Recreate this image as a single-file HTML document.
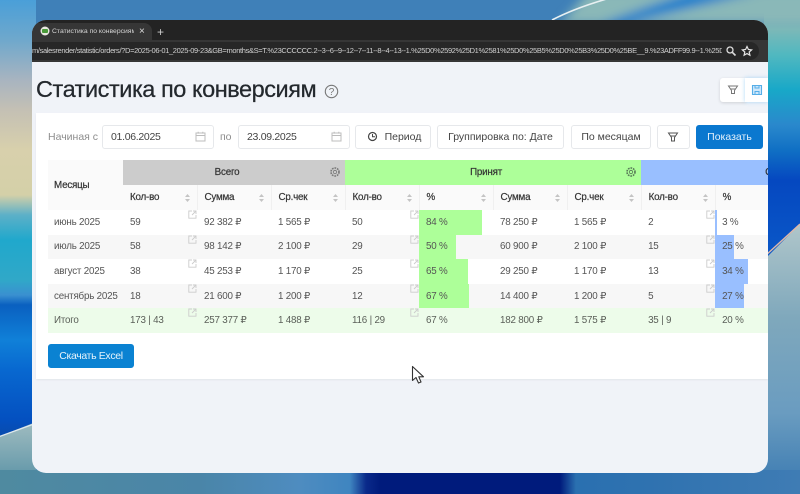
<!DOCTYPE html>
<html lang="ru"><head><meta charset="utf-8"><title>Статистика по конверсиям</title>
<style>
*{box-sizing:border-box}
html,body{margin:0;padding:0;width:800px;height:494px;overflow:hidden;background:#3f80b8;font-family:"Liberation Sans","DejaVu Sans",sans-serif}
.st{position:absolute}
#sl{left:0;top:0;width:36px;height:494px;background:linear-gradient(180deg,#4a9fd8 0,#6fa8cc 40px,#a8b4c0 80px,#c4c0b4 110px,#d8d0ac 150px,#d4d0a8 195px,#5cb0c8 215px,#20a8cc 240px,#30a8c8 280px,#3a90d0 295px,#0a60c0 305px,#1080d8 340px,#0868d0 370px,#0450c0 420px,#0a4aa8 440px)}
#sr{left:764px;top:0;width:36px;height:494px;background:linear-gradient(180deg,#2a88c8 0,#6aa8b8 15px,#7ab8b8 30px,#50b8c0 55px,#18a8c8 90px,#2a88cc 125px,#1070c4 150px,#0548c0 180px,#0a58c8 260px)}
#sb{left:0;top:470px;width:800px;height:24px;background:linear-gradient(90deg,#4f8aa0 0,#4a85a8 200px,#4e8cc0 300px,#3f85c0 350px,#0a2a8a 366px,#001b7c 380px,#001b7c 560px,#2a70b0 576px,#2f72b0 650px,#3f7cb4 800px)}
#bg{position:absolute;left:0;top:0}
#win{position:absolute;left:32px;top:20px;width:736px;height:453px;border-radius:14px;overflow:hidden;background:#f0f3f8;filter:blur(.25px)}
#tabs{position:absolute;left:0;top:0;width:736px;height:22px;background:#232323}
#tab{position:absolute;left:0;top:3px;width:120px;height:19px;background:#363636;border-radius:8px 8px 0 0}
#urlrow{position:absolute;left:0;top:20px;width:736px;height:22px;background:#363636}
#urlpill{position:absolute;left:-20px;top:2px;width:747px;height:18px;border-radius:9px;background:#272727}
#url{position:absolute;left:0;top:24px;width:690px;height:14px;font-size:7.5px;letter-spacing:-.35px;line-height:14px;color:#d0d0d0;white-space:nowrap;overflow:hidden}
#tabt{position:absolute;left:20px;top:3px;font-size:6.8px;line-height:18px;color:#d5d5d5;white-space:nowrap;width:82px;overflow:hidden}
h1{position:absolute;left:4px;top:50px;margin:0;font-size:23.5px;letter-spacing:-.45px;line-height:38px;font-weight:400;color:#23282d;white-space:nowrap;-webkit-text-stroke:.25px #23282d}
#card{position:absolute;left:4px;top:93px;width:732px;height:266px;background:#fff;box-shadow:0 1px 2px rgba(0,0,0,.06)}
.ib{position:absolute;background:#fff;border:1px solid #e6e8eb;border-radius:3px;color:#444;font-size:10.5px;line-height:22px;text-align:center;white-space:nowrap}
.lb{position:absolute;font-size:10.5px;line-height:24px;color:#8d8d8d;white-space:nowrap}
.dd{text-align:left;padding-left:8px;letter-spacing:-.3px}
#tw{position:absolute;left:12px;top:47px;width:720px;height:174px;overflow:hidden}
table{border-collapse:collapse;table-layout:fixed;width:722px;font-size:9.8px;letter-spacing:-.2px;color:#555}
td,th{padding:0 0 0 7px;position:relative;text-align:left;white-space:nowrap;overflow:visible}
td:first-child{padding-left:6px}
th{font-weight:400;color:#333;-webkit-text-stroke:.2px #333}
.h1 th{height:25px;text-align:center;padding:0 14px 0 0}
.h2 th{height:25px;background:#fafafa;border-right:1px solid #f0f0f0}
tbody tr{height:24.6px}
tbody tr:nth-child(odd) td{background:#fff}
tbody tr:nth-child(even) td{background:#f7f7f7}
tbody tr.tot td{background:#edfcea;color:#5a5f58}
.g{background:#ccc}.p{background:#adff99}.b{background:#99bfff}
.bar{position:absolute;left:0;top:0;bottom:0}
.t{position:relative}
.ex{position:absolute;right:0;top:0;width:9px;height:9px}
.so{position:absolute;right:6px;top:8px;width:7px;height:10px}
.cog{position:absolute;right:4px;top:6px;width:12px;height:12px}
</style></head>
<body>
<div class="st" id="sl"></div>
<div class="st" id="sr"></div>
<svg id="bg" width="800" height="494" viewBox="0 0 800 494">
<defs><filter id="f" x="-30%" y="-30%" width="160%" height="160%"><feGaussianBlur stdDeviation="5"/></filter>
<linearGradient id="lg" x1="0" y1="0" x2="0" y2="1"><stop offset="0" stop-color="#a0bcc0"/><stop offset=".6" stop-color="#6f9fae"/><stop offset="1" stop-color="#4a8aa0"/></linearGradient>
<linearGradient id="rg" x1="0" y1="0" x2="0" y2="1"><stop offset="0" stop-color="#b0c6ca"/><stop offset=".35" stop-color="#7fa8bc"/><stop offset=".7" stop-color="#6a9cc0"/><stop offset="1" stop-color="#3878b0"/></linearGradient></defs>
<path d="M0 436L36 422V494H0Z" fill="url(#lg)"/>
<path d="M764 260L800 224V494H764Z" fill="url(#rg)"/>
<path d="M-2 437L34 424" stroke="#dfe8ec" stroke-width="1.3"/>
<path d="M765 256L800 224" stroke="#e0b8a8" stroke-width="1.4"/>
<g filter="url(#f)">
<path d="M590 -10H820V24H560Z" fill="#8ab8b8"/>
<path d="M625 24Q690 8 760 -8H690Q650 5 600 24Z" fill="#1f80cc"/>
</g>
<path d="M552 20Q575 8 610 -2" stroke="#e8f0f2" stroke-width="1.6" fill="none"/>
</svg>
<div class="st" id="sb"></div>

<div id="win">
<div id="tabs"></div>
<div id="tab"></div>
<svg style="position:absolute;left:8px;top:6px" width="10" height="10"><circle cx="5" cy="5" r="4.5" fill="#e8e8e0"/><rect x="2" y="3" width="6" height="4" rx="1" fill="#4a9a3a"/></svg>
<div id="tabt">Статистика по конверсиям - S</div>
<div style="position:absolute;left:107px;top:4px;font-size:10px;line-height:16px;color:#ddd">×</div>
<div style="position:absolute;left:125px;top:4px;font-size:12px;line-height:16px;color:#ccc">+</div>
<div id="urlrow"><div id="urlpill"></div></div>
<div id="url">m/salesrender/statistic/orders/?D=2025-06-01_2025-09-23&amp;GB=months&amp;S=T.%23CCCCCC.2--3--6--9--12--7--11--8--4--13--1.%25D0%2592%25D1%2581%25D0%25B5%25D0%25B3%25D0%25BE__9.%23ADFF99.9--1.%25D...</div>
<svg style="position:absolute;left:693px;top:25px" width="12" height="12" viewBox="0 0 12 12"><circle cx="5" cy="5" r="3" fill="none" stroke="#ddd" stroke-width="1.3"/><path d="M7.3 7.3L10.5 10.5" stroke="#ddd" stroke-width="1.6"/></svg>
<svg style="position:absolute;left:709px;top:25px" width="12" height="12" viewBox="0 0 12 12"><path d="M6 1.5L7.4 4.5L10.6 4.9L8.2 7L8.9 10.2L6 8.6L3.1 10.2L3.8 7L1.4 4.9L4.6 4.5Z" fill="none" stroke="#e4e4e4" stroke-width="1.2"/></svg>

<h1>Статистика по конверсиям</h1>
<svg style="position:absolute;left:292px;top:64px" width="15" height="15" viewBox="0 0 15 15"><circle cx="7.5" cy="7.5" r="6.2" fill="none" stroke="#777" stroke-width="1.1"/><text x="7.5" y="11" font-size="10" text-anchor="middle" fill="#777" font-family="Liberation Sans">?</text></svg>

<div style="position:absolute;left:688px;top:58px;width:26px;height:24px;background:#fff;border-radius:3px 0 0 3px;box-shadow:0 1px 3px rgba(0,0,0,.14)"><svg style="position:absolute;left:7px;top:6px" width="12" height="12" viewBox="0 0 12 12"><path d="M1.5 2H10.5L7.5 6.5V9.5H4.5V6.5Z" fill="none" stroke="#777" stroke-width="1"/><path d="M3.5 5H8.5" stroke="#777"/></svg></div>
<div style="position:absolute;left:713px;top:58px;width:23px;height:24px;background:#fff;box-shadow:0 0 4px rgba(80,170,240,.45)"><svg style="position:absolute;left:6px;top:6px" width="12" height="12" viewBox="0 0 12 12"><path d="M1.5 1.5H10.5V10.5H1.5Z" fill="#cfe8fb" stroke="#55aee8" stroke-width="1.1"/><path d="M4 1.5V4H8V1.5M4 10.5V7.5H8V10.5" fill="none" stroke="#55aee8"/></svg></div>

<div id="card">
<div class="lb" style="left:12px;top:12px">Начиная с</div>
<div class="ib dd" style="left:66px;top:12px;width:112px;height:24px">01.06.2025</div>
<svg style="position:absolute;left:159px;top:18px" width="11" height="11" viewBox="0 0 11 11"><path d="M1 2H10V10H1ZM1 4.5H10M3.2 .8V2.6M7.8 .8V2.6" fill="none" stroke="#bdbdbd"/></svg>
<div class="lb" style="left:184px;top:12px">по</div>
<div class="ib dd" style="left:202px;top:12px;width:112px;height:24px">23.09.2025</div>
<svg style="position:absolute;left:295px;top:18px" width="11" height="11" viewBox="0 0 11 11"><path d="M1 2H10V10H1ZM1 4.5H10M3.2 .8V2.6M7.8 .8V2.6" fill="none" stroke="#bdbdbd"/></svg>
<div class="ib" style="left:319px;top:12px;width:76px;height:24px;padding-left:20px">Период</div>
<svg style="position:absolute;left:331px;top:18px" width="11" height="11" viewBox="0 0 11 11"><circle cx="5.5" cy="5.5" r="4" fill="none" stroke="#444" stroke-width="1.2"/><path d="M5.5 3V5.8H8" fill="none" stroke="#444"/></svg>
<div class="ib" style="left:401px;top:12px;width:127px;height:24px">Группировка по: Дате</div>
<div class="ib" style="left:535px;top:12px;width:80px;height:24px">По месяцам</div>
<div class="ib" style="left:621px;top:12px;width:33px;height:24px"></div>
<svg style="position:absolute;left:631px;top:18px" width="12" height="12" viewBox="0 0 12 12"><path d="M1.5 2H10.5L7.5 6.5V10H4.5V6.5Z" fill="none" stroke="#555" stroke-width="1"/><path d="M3.5 5H8.5" stroke="#555"/></svg>
<div class="ib" style="left:660px;top:12px;width:67px;height:24px;background:#0a78cf;border-color:#0a78cf;color:#e4f1fb">Показать</div>

<div id="tw">
<table>
<colgroup><col style="width:75px"><col style="width:74px"><col style="width:74px"><col style="width:74px"><col style="width:74px"><col style="width:74px"><col style="width:74px"><col style="width:74px"><col style="width:74px"><col style="width:55px"></colgroup>
<thead>
<tr class="h1"><th rowspan="2" style="background:#fafafa;text-align:left;padding-left:6px">Месяцы</th>
<th colspan="3" class="g">Всего<svg class="cog" viewBox="0 0 12 12"><circle cx="6" cy="6" r="1.7" fill="none" stroke="#777" stroke-width=".8"/><circle cx="6" cy="6" r="4" fill="none" stroke="#777" stroke-width="1.6" stroke-dasharray="1.7 .9"/></svg></th>
<th colspan="4" class="p">Принят<svg class="cog" viewBox="0 0 12 12"><circle cx="6" cy="6" r="1.7" fill="none" stroke="#575" stroke-width=".8"/><circle cx="6" cy="6" r="4" fill="none" stroke="#575" stroke-width="1.6" stroke-dasharray="1.7 .9"/></svg></th>
<th colspan="2" class="b" style="text-align:left;padding-left:124px">С</th></tr>
<tr class="h2"><th>Кол-во<svg class="so" viewBox="0 0 7 10"><path d="M3.5 1L6 4H1ZM3.5 9L1 6H6Z" fill="#c4c4c4"/></svg></th><th>Сумма<svg class="so" viewBox="0 0 7 10"><path d="M3.5 1L6 4H1ZM3.5 9L1 6H6Z" fill="#c4c4c4"/></svg></th><th>Ср.чек<svg class="so" viewBox="0 0 7 10"><path d="M3.5 1L6 4H1ZM3.5 9L1 6H6Z" fill="#c4c4c4"/></svg></th><th>Кол-во<svg class="so" viewBox="0 0 7 10"><path d="M3.5 1L6 4H1ZM3.5 9L1 6H6Z" fill="#c4c4c4"/></svg></th><th>%<svg class="so" viewBox="0 0 7 10"><path d="M3.5 1L6 4H1ZM3.5 9L1 6H6Z" fill="#c4c4c4"/></svg></th><th>Сумма<svg class="so" viewBox="0 0 7 10"><path d="M3.5 1L6 4H1ZM3.5 9L1 6H6Z" fill="#c4c4c4"/></svg></th><th>Ср.чек<svg class="so" viewBox="0 0 7 10"><path d="M3.5 1L6 4H1ZM3.5 9L1 6H6Z" fill="#c4c4c4"/></svg></th><th>Кол-во<svg class="so" viewBox="0 0 7 10"><path d="M3.5 1L6 4H1ZM3.5 9L1 6H6Z" fill="#c4c4c4"/></svg></th><th>%</th></tr>
</thead>
<tbody>
<tr><td>июнь 2025</td><td>59<svg class="ex" viewBox="0 0 9 9"><path d="M4 1H.8V8.2H8V5M5 1H8V4M8 1L4 5" fill="none" stroke="#ccc" stroke-width=".9"/></svg></td><td>92 382 ₽</td><td>1 565 ₽</td><td>50<svg class="ex" viewBox="0 0 9 9"><path d="M4 1H.8V8.2H8V5M5 1H8V4M8 1L4 5" fill="none" stroke="#ccc" stroke-width=".9"/></svg></td><td><div class="bar p" style="width:63px"></div><span class="t">84 %</span></td><td>78 250 ₽</td><td>1 565 ₽</td><td>2<svg class="ex" viewBox="0 0 9 9"><path d="M4 1H.8V8.2H8V5M5 1H8V4M8 1L4 5" fill="none" stroke="#ccc" stroke-width=".9"/></svg></td><td><div class="bar b" style="width:2px"></div><span class="t">3 %</span></td></tr>
<tr><td>июль 2025</td><td>58<svg class="ex" viewBox="0 0 9 9"><path d="M4 1H.8V8.2H8V5M5 1H8V4M8 1L4 5" fill="none" stroke="#ccc" stroke-width=".9"/></svg></td><td>98 142 ₽</td><td>2 100 ₽</td><td>29<svg class="ex" viewBox="0 0 9 9"><path d="M4 1H.8V8.2H8V5M5 1H8V4M8 1L4 5" fill="none" stroke="#ccc" stroke-width=".9"/></svg></td><td><div class="bar p" style="width:37px"></div><span class="t">50 %</span></td><td>60 900 ₽</td><td>2 100 ₽</td><td>15<svg class="ex" viewBox="0 0 9 9"><path d="M4 1H.8V8.2H8V5M5 1H8V4M8 1L4 5" fill="none" stroke="#ccc" stroke-width=".9"/></svg></td><td><div class="bar b" style="width:19px"></div><span class="t">25 %</span></td></tr>
<tr><td>август 2025</td><td>38<svg class="ex" viewBox="0 0 9 9"><path d="M4 1H.8V8.2H8V5M5 1H8V4M8 1L4 5" fill="none" stroke="#ccc" stroke-width=".9"/></svg></td><td>45 253 ₽</td><td>1 170 ₽</td><td>25<svg class="ex" viewBox="0 0 9 9"><path d="M4 1H.8V8.2H8V5M5 1H8V4M8 1L4 5" fill="none" stroke="#ccc" stroke-width=".9"/></svg></td><td><div class="bar p" style="width:49px"></div><span class="t">65 %</span></td><td>29 250 ₽</td><td>1 170 ₽</td><td>13<svg class="ex" viewBox="0 0 9 9"><path d="M4 1H.8V8.2H8V5M5 1H8V4M8 1L4 5" fill="none" stroke="#ccc" stroke-width=".9"/></svg></td><td><div class="bar b" style="width:33px"></div><span class="t">34 %</span></td></tr>
<tr><td>сентябрь 2025</td><td>18<svg class="ex" viewBox="0 0 9 9"><path d="M4 1H.8V8.2H8V5M5 1H8V4M8 1L4 5" fill="none" stroke="#ccc" stroke-width=".9"/></svg></td><td>21 600 ₽</td><td>1 200 ₽</td><td>12<svg class="ex" viewBox="0 0 9 9"><path d="M4 1H.8V8.2H8V5M5 1H8V4M8 1L4 5" fill="none" stroke="#ccc" stroke-width=".9"/></svg></td><td><div class="bar p" style="width:50px"></div><span class="t">67 %</span></td><td>14 400 ₽</td><td>1 200 ₽</td><td>5<svg class="ex" viewBox="0 0 9 9"><path d="M4 1H.8V8.2H8V5M5 1H8V4M8 1L4 5" fill="none" stroke="#ccc" stroke-width=".9"/></svg></td><td><div class="bar b" style="width:29px"></div><span class="t">27 %</span></td></tr>
<tr class="tot"><td>Итого</td><td>173 | 43<svg class="ex" viewBox="0 0 9 9"><path d="M4 1H.8V8.2H8V5M5 1H8V4M8 1L4 5" fill="none" stroke="#ccc" stroke-width=".9"/></svg></td><td>257 377 ₽</td><td>1 488 ₽</td><td>116 | 29<svg class="ex" viewBox="0 0 9 9"><path d="M4 1H.8V8.2H8V5M5 1H8V4M8 1L4 5" fill="none" stroke="#ccc" stroke-width=".9"/></svg></td><td>67 %</td><td>182 800 ₽</td><td>1 575 ₽</td><td>35 | 9<svg class="ex" viewBox="0 0 9 9"><path d="M4 1H.8V8.2H8V5M5 1H8V4M8 1L4 5" fill="none" stroke="#ccc" stroke-width=".9"/></svg></td><td>20 %</td></tr>
</tbody>
</table>
</div>

<div class="ib" style="left:12px;top:231px;width:86px;height:24px;background:#0a82d2;border-color:#0a82d2;color:#e6f3fb;letter-spacing:-.35px">Скачать Excel</div>
</div>
</div>
<svg style="position:absolute;left:410px;top:364px" width="18" height="21" viewBox="0 0 18 21"><path d="M2.5 2.5V16.5L6 13.5L8.5 19L11 18L8.8 12.8H13.5Z" fill="#fff" stroke="#333" stroke-width="1.1" stroke-linejoin="round"/></svg>
</body></html>
